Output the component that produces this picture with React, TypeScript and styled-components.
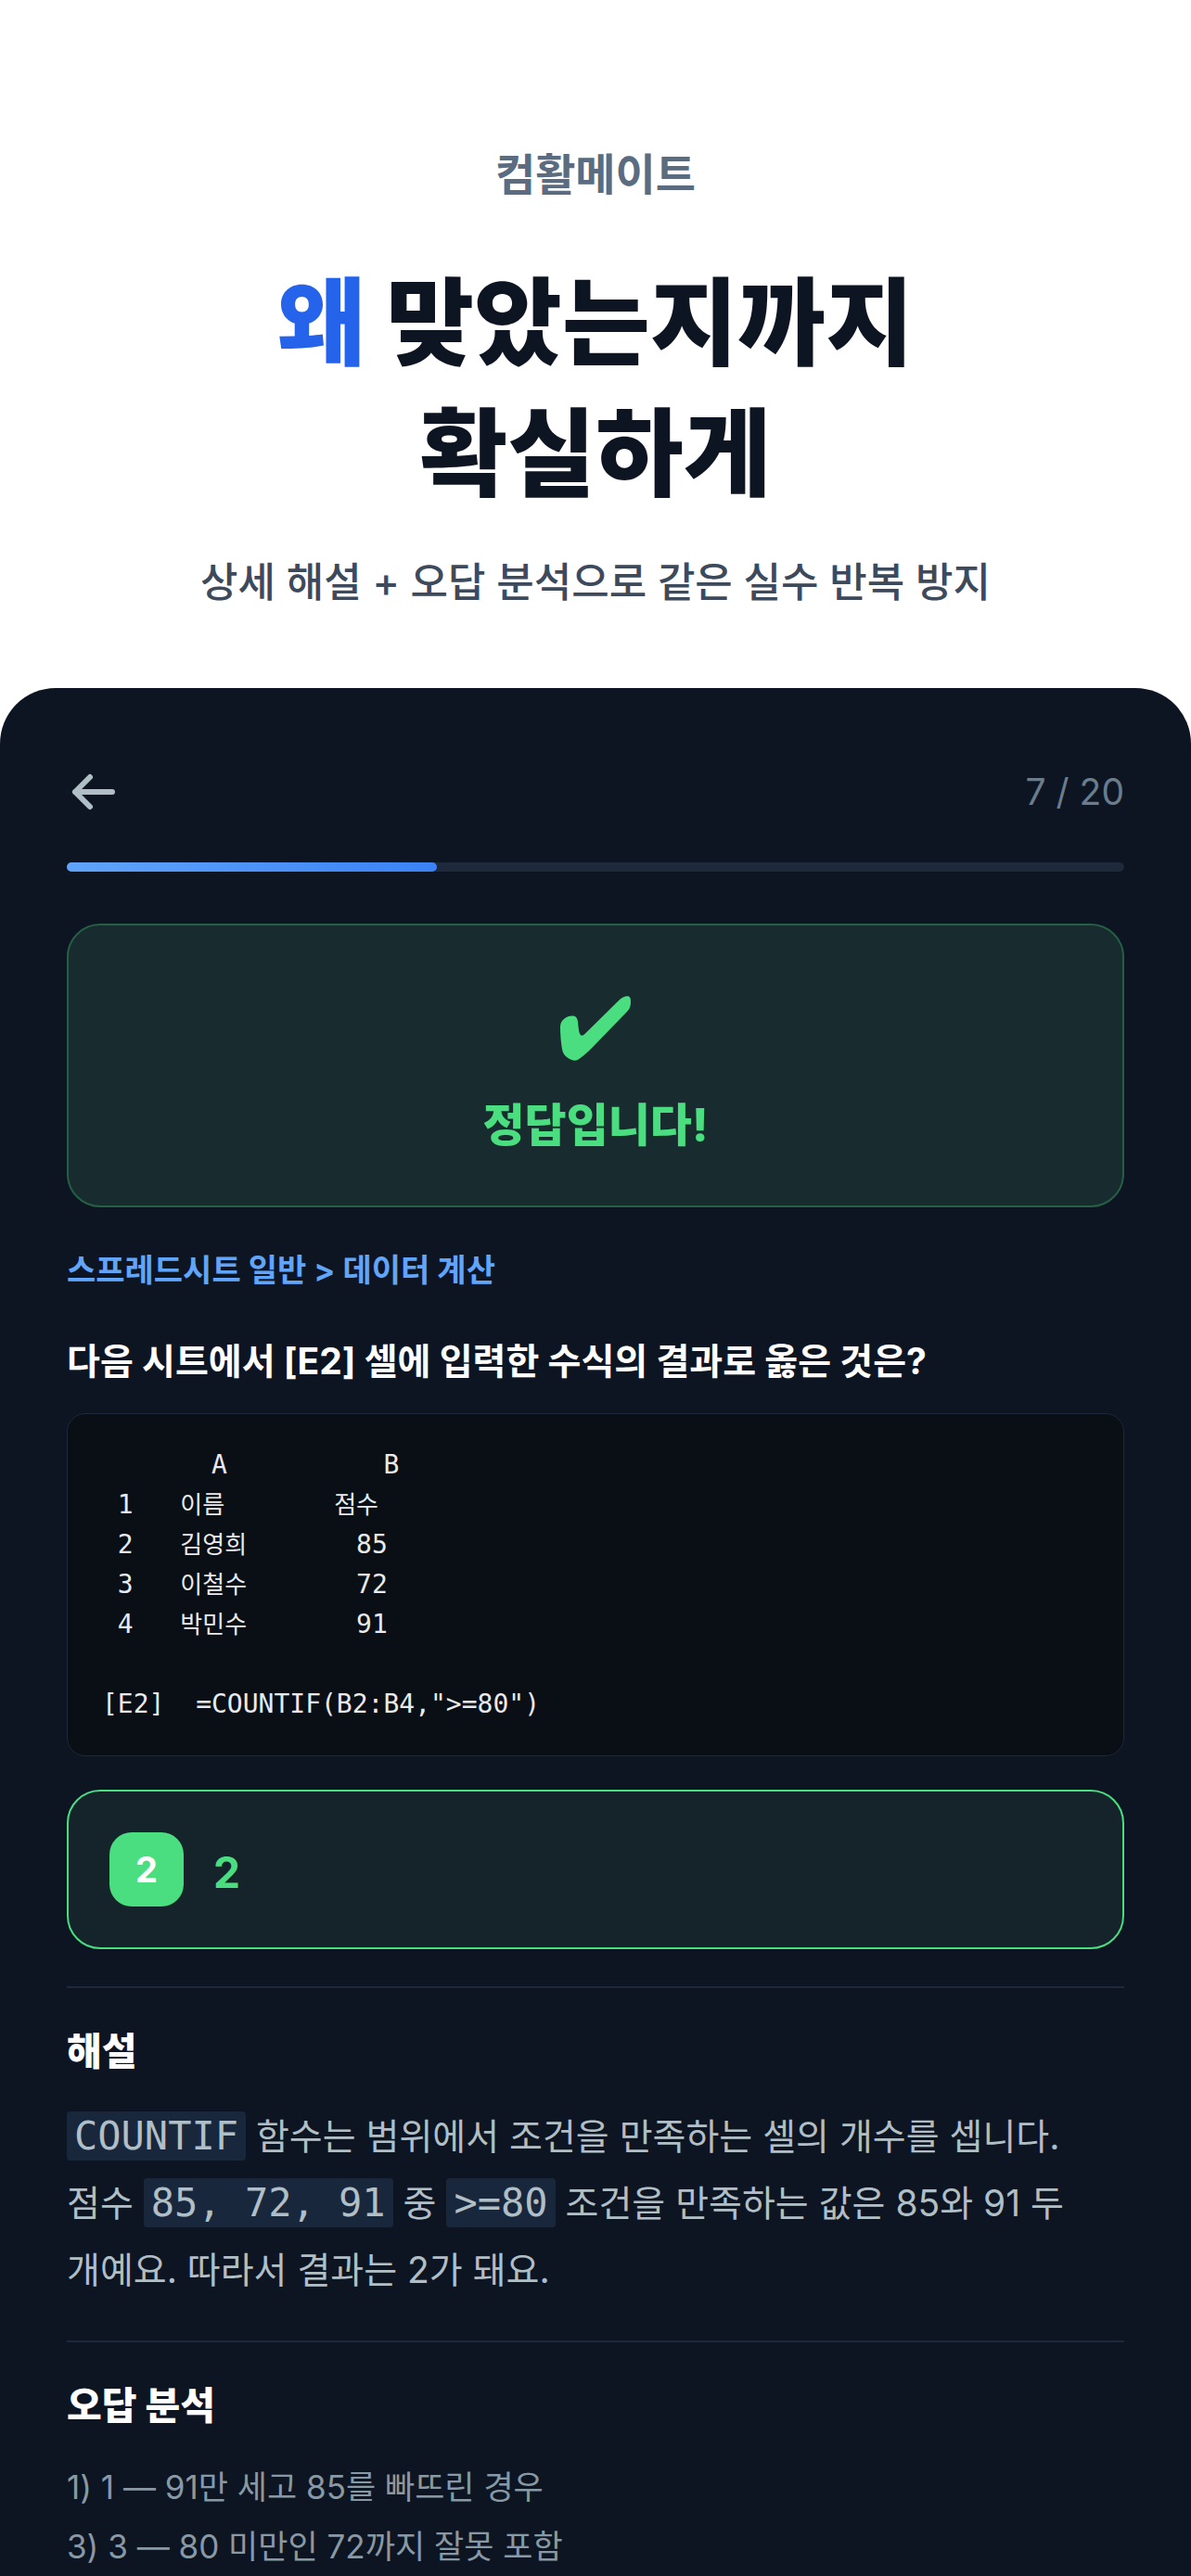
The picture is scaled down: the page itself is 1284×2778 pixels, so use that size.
import React from "react";
import styled, { createGlobalStyle } from "styled-components";

const sans = `Inter, "Noto Sans CJK KR", sans-serif`;
const mono = `"DejaVu Sans Mono", "Noto Sans CJK KR", monospace`;

const color = {
  sheet: "#0e1522",
  line: "#1e293b",
  blue: "#60a5fa",
  green: "#4ade80",
  body: "#b0bec5",
  note: "#8899a6",
  faint: "#6b7c8c",
};

const GlobalStyle = createGlobalStyle`
  *, *::before, *::after { box-sizing: border-box; }
  body { margin: 0; background: #fff; font-family: ${sans}; }
  h1, h2, h3, p, pre, ol { margin: 0; padding: 0; }
`;

const Page = styled.main`
  min-height: 100vh;
  display: flex;
  flex-direction: column;
  word-break: keep-all;
`;

const Hero = styled.header`
  display: flex;
  flex-direction: column;
  align-items: center;
  padding: 156px 40px 82px;
  text-align: center;
`;

const Brand = styled.p`
  font-size: 47px;
  line-height: 64px;
  font-weight: 700;
  color: #5b6b80;
`;

const Title = styled.h1`
  margin-top: 58px;
  font-size: 103px;
  line-height: 141px;
  font-weight: 800;
  color: #0e1522;
`;

const Accent = styled.span`
  color: #2563eb;
`;

const Subtitle = styled.p`
  margin-top: 36px;
  font-size: 44px;
  line-height: 64px;
  font-weight: 500;
  color: #3d4a5c;
`;

const Sheet = styled.section`
  flex: 1;
  display: flex;
  flex-direction: column;
  padding: 80px 72px 0;
  border-radius: 60px 60px 0 0;
  background: ${color.sheet};
`;

const TopBar = styled.div`
  display: flex;
  align-items: center;
  justify-content: space-between;
  height: 64px;
`;

const BackButton = styled.button`
  display: flex;
  padding: 0;
  border: 0;
  background: none;
  color: ${color.body};
  cursor: pointer;
`;

const Counter = styled.span`
  font-size: 39px;
  line-height: 56px;
  color: ${color.faint};
`;

const Track = styled.div`
  height: 10px;
  margin-top: 44px;
  border-radius: 5px;
  background: ${color.line};
`;

const Fill = styled.div`
  height: 100%;
  border-radius: 5px;
  background: linear-gradient(90deg, #60a5fa, #3b82f6);
`;

const Result = styled.div`
  display: flex;
  flex-direction: column;
  align-items: center;
  gap: 32px;
  margin-top: 56px;
  padding: 76px 40px 48px;
  border: 2px solid #256045;
  border-radius: 36px;
  background: #182b2e;
  color: ${color.green};
`;

const ResultText = styled.p`
  font-size: 49px;
  line-height: 76px;
  font-weight: 800;
`;

const Crumb = styled.p`
  margin-top: 40px;
  font-size: 34px;
  line-height: 56px;
  font-weight: 700;
  color: ${color.blue};
`;

const Question = styled.h2`
  margin-top: 38px;
  font-size: 39px;
  line-height: 64px;
  font-weight: 700;
  color: #fff;
`;

const Code = styled.pre`
  margin-top: 24px;
  padding: 33px 37px 34px;
  border: 1px solid ${color.line};
  border-radius: 20px;
  background: #0a0e15;
  font-family: ${mono};
  font-size: 28px;
  line-height: 43px;
  color: #e8eaed;
`;

const Hangul = styled.span`
  font-size: 26px;
  line-height: 26px;
`;

const Answer = styled.div`
  display: flex;
  align-items: center;
  gap: 32px;
  margin-top: 36px;
  padding: 44px;
  border: 2px solid ${color.green};
  border-radius: 36px;
  background: #14242a;
`;

const Badge = styled.span`
  display: flex;
  align-items: center;
  justify-content: center;
  width: 80px;
  height: 80px;
  border-radius: 24px;
  background: ${color.green};
  font-size: 38px;
  font-weight: 700;
  color: #fff;
`;

const AnswerText = styled.span`
  padding-top: 6px;
  font-size: 46px;
  line-height: 64px;
  font-weight: 700;
  color: ${color.green};
`;

const Block = styled.section`
  margin-top: 40px;
  padding-top: 36px;
  border-top: 2px solid ${color.line};
`;

const BlockTitle = styled.h3`
  font-size: 41px;
  line-height: 64px;
  font-weight: 800;
  color: #fff;
`;

const Explanation = styled.p`
  margin-top: 24px;
  font-size: 39px;
  line-height: 72px;
  color: ${color.body};
`;

const Token = styled.code`
  padding: 2px 8px;
  border-radius: 4px;
  background: #19273c;
  font-family: ${mono};
  font-size: 42px;
  line-height: 56px;
`;

const Notes = styled.ol`
  margin-top: 24px;
  list-style: none;
  font-size: 35px;
  line-height: 64px;
  color: ${color.note};
`;

const sheetRows: [string, string, string][] = [
  [" 1   ", "이름", "점수"],
  [" 2   ", "김영희", "85"],
  [" 3   ", "이철수", "72"],
  [" 4   ", "박민수", "91"],
];

const wrongAnswers = [
  "1) 1 — 91만 세고 85를 빠뜨린 경우",
  "3) 3 — 80 미만인 72까지 잘못 포함",
];

const current = 7;
const total = 20;

export default function App() {
  return (
    <>
      <GlobalStyle />
      <Page>
        <Hero>
          <Brand>컴활메이트</Brand>
          <Title>
            <Accent>왜</Accent> 맞았는지까지
            <br />
            확실하게
          </Title>
          <Subtitle>상세 해설 + 오답 분석으로 같은 실수 반복 방지</Subtitle>
        </Hero>

        <Sheet>
          <TopBar>
            <BackButton type="button" aria-label="뒤로">
              <svg width="56" height="56" viewBox="0 0 56 56" fill="none" stroke="currentColor" strokeWidth="6" strokeLinecap="round" strokeLinejoin="round">
                <path d="M49 28H9M25 12L9 28l16 16" />
              </svg>
            </BackButton>
            <Counter>
              {current} / {total}
            </Counter>
          </TopBar>

          <Track role="progressbar" aria-label="진행률" aria-valuemin={0} aria-valuemax={total} aria-valuenow={current}>
            <Fill style={{ width: `${(current / total) * 100}%` }} />
          </Track>

          <Result>
            <svg width="76" height="70" viewBox="0 0 76 70" fill="currentColor" aria-hidden="true">
              <path d="M0 33C0 26 7 21.500 13 21.500C17 21.500 18.500 24 19 28C19.700 34 20 39 21.500 41.500C22.500 43.500 24.500 43 27 40.500L62 6C66 2 69.500 0.300 72.500 0.300C75 0.300 76 2.500 76 6C76 11 75 14 71.500 17.500L40 50C33 57.500 27 63 21 67.500C17.500 70.200 14.500 70.200 11 68.500C7.500 66.800 4 64 2.800 60.500C1 54 0 42 0 33Z" />
            </svg>
            <ResultText>정답입니다!</ResultText>
          </Result>

          <Crumb>스프레드시트 일반 &gt; 데이터 계산</Crumb>
          <Question>다음 시트에서 [E2] 셀에 입력한 수식의 결과로 옳은 것은?</Question>

          <Code>
            {"       A          B\n"}
            {sheetRows.map(([row, name, score]) => (
              <React.Fragment key={row}>
                {row}
                <Hangul>{name}</Hangul>
                {"       "}
                {score === "점수" ? <Hangul>{score}</Hangul> : score}
                {"\n"}
              </React.Fragment>
            ))}
            {'\n[E2]  =COUNTIF(B2:B4,">=80")'}
          </Code>

          <Answer>
            <Badge>2</Badge>
            <AnswerText>2</AnswerText>
          </Answer>

          <Block>
            <BlockTitle>해설</BlockTitle>
            <Explanation>
              <Token>COUNTIF</Token> 함수는 범위에서 조건을 만족하는 셀의 개수를 셉니다.
              <br />
              점수 <Token>85, 72, 91</Token> 중 <Token>&gt;=80</Token> 조건을 만족하는 값은 85와 91 두
              <br />
              개예요. 따라서 결과는 2가 돼요.
            </Explanation>
          </Block>

          <Block>
            <BlockTitle>오답 분석</BlockTitle>
            <Notes>
              {wrongAnswers.map((text) => (
                <li key={text}>{text}</li>
              ))}
            </Notes>
          </Block>
        </Sheet>
      </Page>
    </>
  );
}
